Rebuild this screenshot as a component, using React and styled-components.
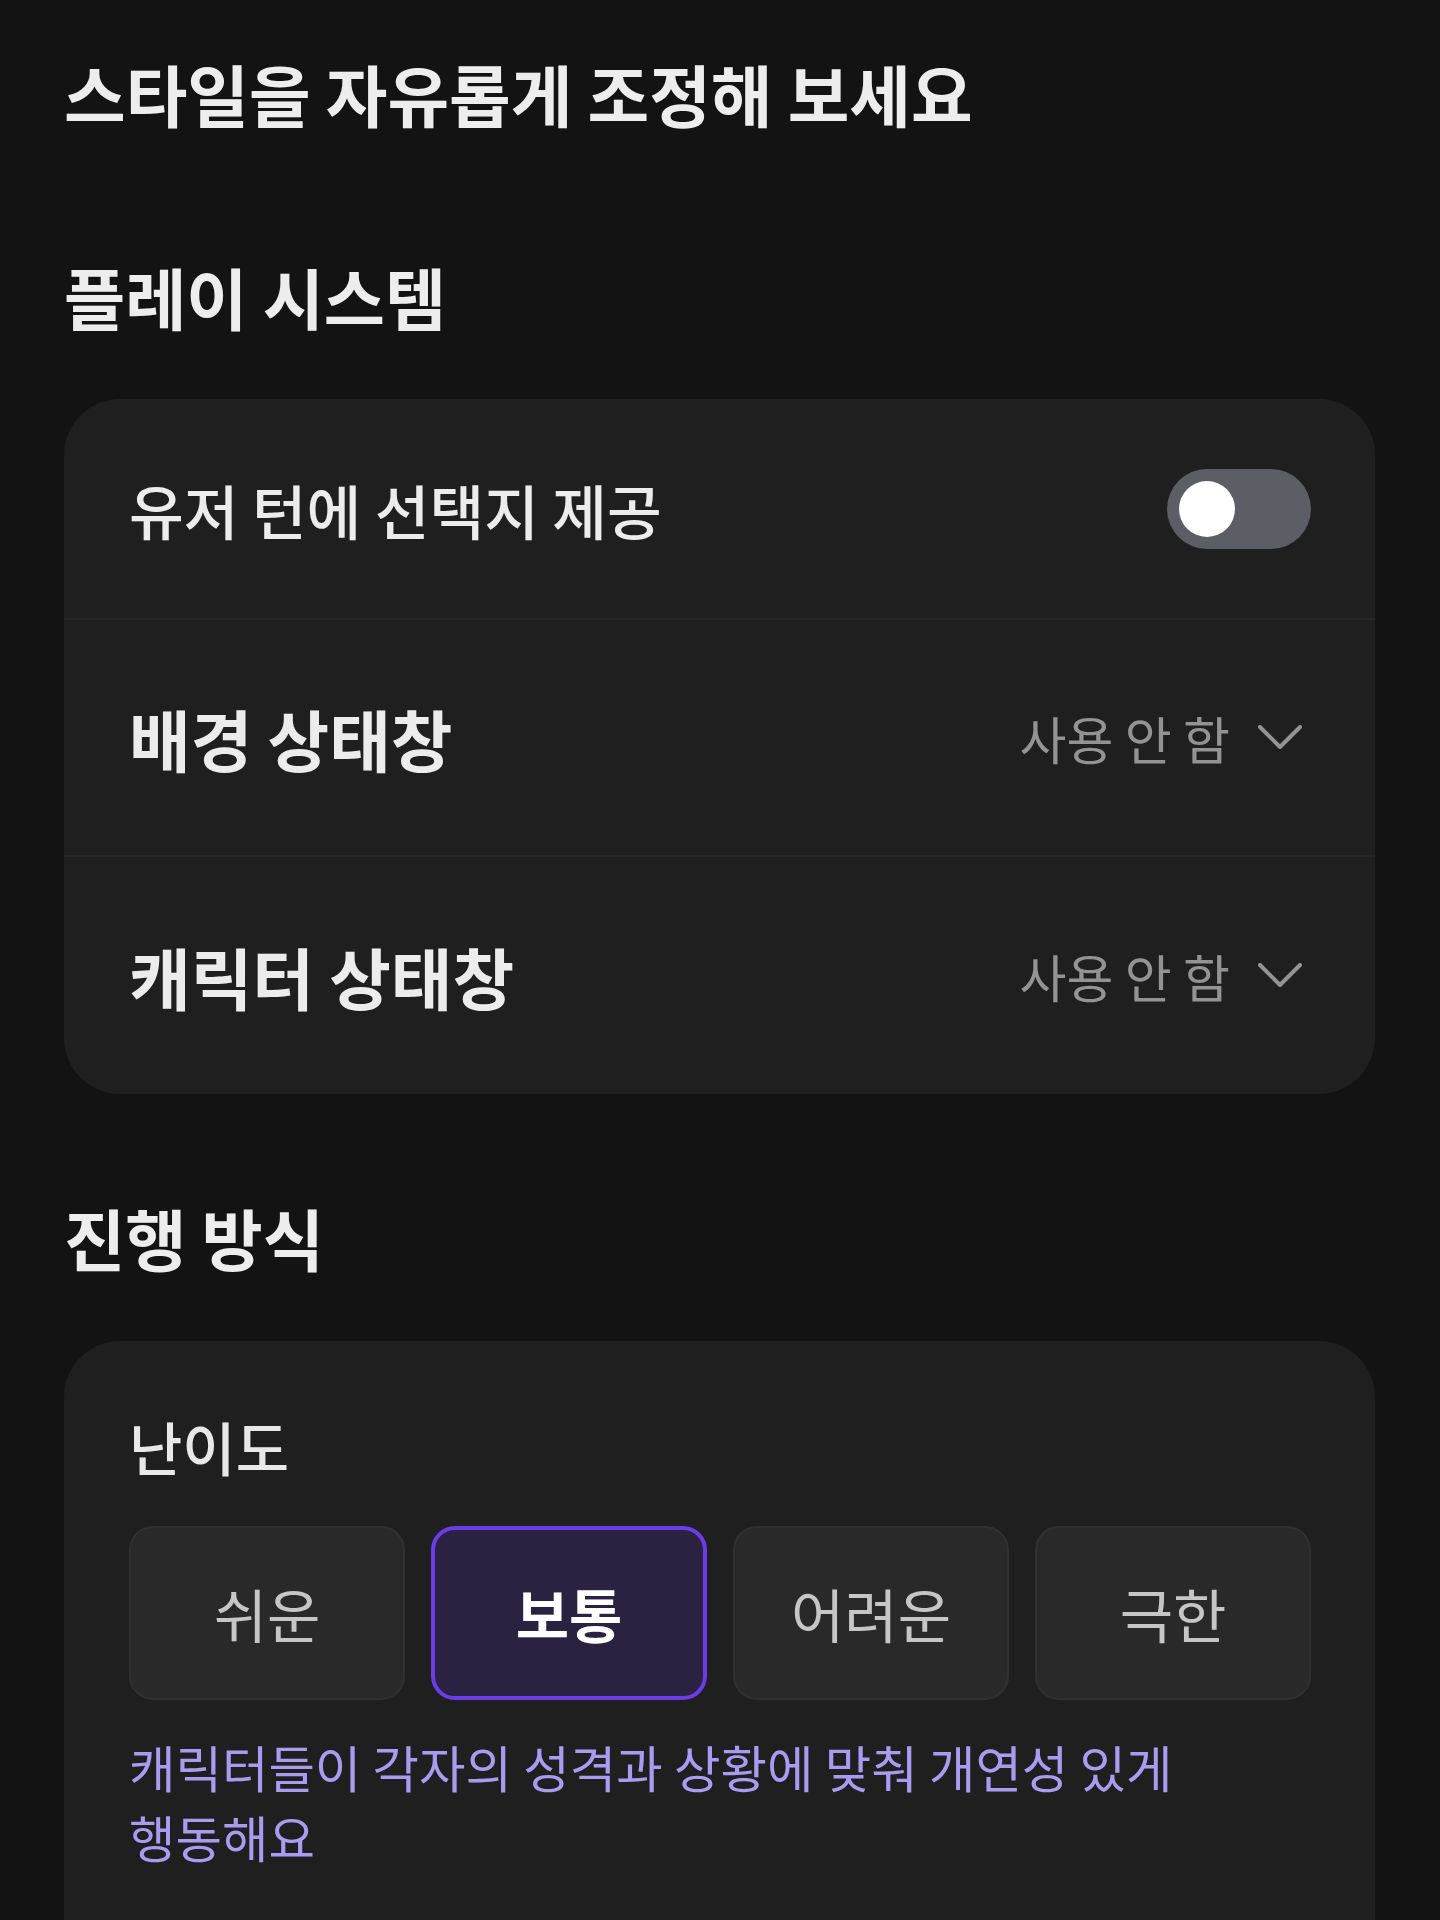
import React, { useState } from 'react';
import styled, { createGlobalStyle } from 'styled-components';

const GlobalStyle = createGlobalStyle`
  html, body {
    margin: 0;
    padding: 0;
    background: #131313;
  }
  body {
    font-family: 'Noto Sans CJK KR', 'Noto Sans', sans-serif;
    color: #ececec;
    word-break: keep-all;
  }
`;

const Page = styled.div`
  display: flex;
  flex-direction: column;
  padding: 51px 65px 0 64px;
  min-height: 1920px;
  box-sizing: border-box;
  overflow: hidden;
`;

const Title = styled.h1`
  margin: 0;
  font-size: 67px;
  line-height: 84px;
  font-weight: 700;
  color: #ededed;
`;

const SectionTitle = styled.h2`
  margin: ${(p) => p.$top}px 0 ${(p) => p.$bottom}px;
  font-size: 66.5px;
  line-height: 84px;
  font-weight: 700;
  color: #ededed;
`;

const Card = styled.div`
  background: #1f1f1f;
  border-radius: 56px;
  display: flex;
  flex-direction: column;
  padding: ${(p) => p.$padding || '0'};
`;

const Row = styled.div`
  display: flex;
  align-items: center;
  justify-content: space-between;
  height: ${(p) => p.$height}px;
  padding: 0 64px 0 65px;
  border-bottom: ${(p) => (p.$last ? 'none' : '2px solid #262626')};
`;

const RowLabel = styled.span`
  font-size: ${(p) => (p.$strong ? '67px' : '59.5px')};
  font-weight: ${(p) => (p.$strong ? 700 : 500)};
  color: #ececec;
`;

const Toggle = styled.button`
  width: 144px;
  height: 80px;
  border-radius: 40px;
  border: none;
  background: ${(p) => (p.$on ? '#6a3de8' : '#5b5e64')};
  padding: 0 12px;
  display: flex;
  align-items: center;
  justify-content: ${(p) => (p.$on ? 'flex-end' : 'flex-start')};
  cursor: pointer;
`;

const Knob = styled.span`
  width: 56px;
  height: 56px;
  border-radius: 50%;
  background: #ffffff;
`;

const Select = styled.div`
  display: flex;
  align-items: center;
  gap: 28px;
  color: #939393;
  font-size: 51px;
  font-weight: 400;
  margin-right: 9px;
`;

const Label = styled.div`
  font-size: 58px;
  line-height: 70px;
  font-weight: 500;
  color: #e8e8e8;
`;

const Levels = styled.div`
  display: grid;
  grid-template-columns: repeat(4, 1fr);
  gap: 26px;
  margin-top: 45px;
`;

const Level = styled.button`
  height: 174px;
  box-sizing: border-box;
  border-radius: 24px;
  font-family: inherit;
  font-size: 58px;
  font-weight: ${(p) => (p.$active ? 700 : 400)};
  color: ${(p) => (p.$active ? '#ffffff' : '#c6c6c6')};
  background: ${(p) => (p.$active ? '#2b2141' : '#292929')};
  border: ${(p) => (p.$active ? '4px solid #6a3de8' : '2px solid #303030')};
  cursor: pointer;
`;

const Description = styled.p`
  margin: 31px 0 0;
  font-size: 50.5px;
  line-height: 70px;
  font-weight: 400;
  color: #a99bf0;
  height: 400px;
`;

const Chevron = () => (
  <svg width="44" height="26" viewBox="0 0 44 26" fill="none">
    <path
      d="M2 2 L22 22 L42 2"
      stroke="#939393"
      strokeWidth="4"
      strokeLinecap="round"
      strokeLinejoin="round"
    />
  </svg>
);

const levels = ['쉬운', '보통', '어려운', '극한'];

const App = () => {
  const [choices, setChoices] = useState(false);
  const [level, setLevel] = useState('보통');

  return (
    <Page>
      <GlobalStyle />
      <Title>스타일을 자유롭게 조정해 보세요</Title>

      <SectionTitle $top={119} $bottom={61}>플레이 시스템</SectionTitle>
      <Card>
        <Row $height={219}>
          <RowLabel>유저 턴에 선택지 제공</RowLabel>
          <Toggle $on={choices} onClick={() => setChoices(!choices)}>
            <Knob />
          </Toggle>
        </Row>
        <Row $height={235}>
          <RowLabel $strong>배경 상태창</RowLabel>
          <Select>
            사용 안 함
            <Chevron />
          </Select>
        </Row>
        <Row $height={237} $last>
          <RowLabel $strong>캐릭터 상태창</RowLabel>
          <Select>
            사용 안 함
            <Chevron />
          </Select>
        </Row>
      </Card>

      <SectionTitle $top={101} $bottom={62}>진행 방식</SectionTitle>
      <Card $padding="70px 64px 0 65px">
        <Label>난이도</Label>
        <Levels>
          {levels.map((v) => (
            <Level key={v} $active={v === level} onClick={() => setLevel(v)}>
              {v}
            </Level>
          ))}
        </Levels>
        <Description>
          캐릭터들이 각자의 성격과 상황에 맞춰 개연성 있게 행동해요
        </Description>
      </Card>
    </Page>
  );
};

export default App;
